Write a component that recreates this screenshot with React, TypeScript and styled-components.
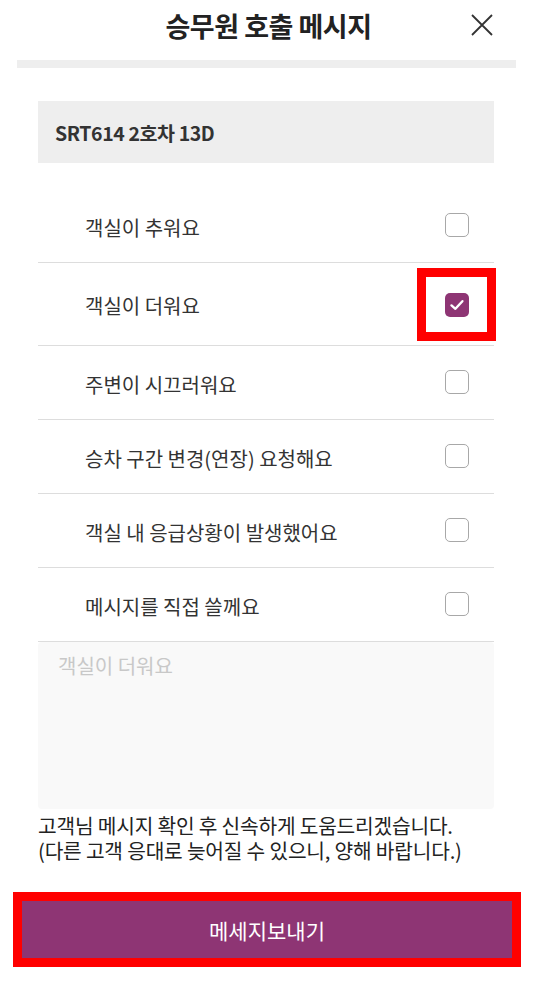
import React, { useState } from 'react'
import styled, { createGlobalStyle } from 'styled-components'

const PURPLE = '#8e3574'

const options = [
    '객실이 추워요',
    '객실이 더워요',
    '주변이 시끄러워요',
    '승차 구간 변경(연장) 요청해요',
    '객실 내 응급상황이 발생했어요',
    '메시지를 직접 쓸께요',
]

export default function App() {
    const [checked, setChecked] = useState(1)

    return (
        <>
            <GlobalStyle />
            <Page>
                <Header>
                    <span />
                    <Title>승무원 호출 메시지</Title>
                    <CloseButton aria-label='닫기'>
                        <svg width='24' height='24' viewBox='0 0 24 24'>
                            <path d='M2 2 L22 22 M22 2 L2 22' stroke='#333' strokeWidth='1.8' fill='none' />
                        </svg>
                    </CloseButton>
                </Header>
                <Divider />
                <Content>
                    <InfoBox>SRT614 2호차 13D</InfoBox>
                    <List>
                        {options.map((label, i) => {
                            const box = (
                                <CheckBox checked={checked === i}>
                                    {checked === i && (
                                        <svg width='16' height='16' viewBox='0 0 16 16'>
                                            <path d='M2.5 8.4 L6.4 11.8 L13.4 4.2' stroke='#fff' strokeWidth='2.4' fill='none' strokeLinecap='round' strokeLinejoin='round' />
                                        </svg>
                                    )}
                                </CheckBox>
                            )
                            return (
                                <Row key={i} onClick={() => setChecked(i)}>
                                    <Label>{label}</Label>
                                    {checked === i ? <Highlight>{box}</Highlight> : box}
                                </Row>
                            )
                        })}
                    </List>
                    <MessageInput placeholder='객실이 더워요' />
                    <Notice>
                        <NoticeLine>고객님 메시지 확인 후 신속하게 도움드리겠습니다.</NoticeLine>
                        <NoticeLine>(다른 고객 응대로 늦어질 수 있으니, 양해 바랍니다.)</NoticeLine>
                    </Notice>
                </Content>
                <Footer>
                    <SendFrame>
                        <SendButton>메세지보내기</SendButton>
                    </SendFrame>
                </Footer>
            </Page>
        </>
    )
}

const GlobalStyle = createGlobalStyle`
    html, body {
        margin: 0;
        padding: 0;
        background: #fff;
    }
    * {
        box-sizing: border-box;
    }
`

const Page = styled.div`
    width: 537px;
    font-family: "Noto Sans CJK KR", "Noto Sans", sans-serif;
    color: #333;
`

const Header = styled.div`
    display: grid;
    grid-template-columns: 1fr auto 1fr;
    align-items: center;
    height: 50px;
`

const Title = styled.h1`
    margin: 0;
    font-size: 27px;
    font-weight: 700;
    color: #222;
    letter-spacing: -0.5px;
`

const CloseButton = styled.button`
    justify-self: end;
    margin-right: 43px;
    padding: 0;
    border: none;
    background: none;
    display: flex;
`

const Divider = styled.div`
    height: 8px;
    margin: 10px 21px 0 17px;
    background: #eeeeee;
`

const Content = styled.div`
    padding: 33px 43px 0 38px;
`

const InfoBox = styled.div`
    display: flex;
    align-items: center;
    height: 62px;
    padding-left: 17px;
    background: #eeeeee;
    font-size: 19.5px;
    font-weight: 700;
    color: #333;
    letter-spacing: -0.4px;
`

const List = styled.div`
    margin-top: 26px;
`

const Row = styled.div`
    display: flex;
    align-items: center;
    justify-content: space-between;
    min-height: 74px;
    padding: 3px 25px 0 47px;
    border-bottom: 1px solid #dddddd;
    cursor: pointer;
`

const Label = styled.span`
    font-size: 20px;
    color: #333;
`

const CheckBox = styled.span<{ checked: boolean }>`
    display: flex;
    align-items: center;
    justify-content: center;
    flex-shrink: 0;
    width: 24px;
    height: 24px;
    margin-top: -5px;
    border-radius: 5px;
    border: ${p => (p.checked ? 'none' : '1.5px solid #a8a8a8')};
    background: ${p => (p.checked ? PURPLE : '#fff')};
`

const Highlight = styled.span`
    display: flex;
    align-items: center;
    justify-content: center;
    flex-shrink: 0;
    width: 79px;
    height: 73px;
    margin: 2px -27px 4px 0;
    border: 9px solid #ff0000;

    & > span {
        margin-top: 0;
    }
`

const MessageInput = styled.textarea`
    display: block;
    width: 100%;
    height: 167px;
    margin-top: 0;
    padding: 11px 20px;
    border: none;
    border-radius: 4px;
    background: #f9f9f9;
    resize: none;
    font-family: "Noto Sans CJK KR", "Noto Sans", sans-serif;
    font-size: 20px;
    line-height: 26px;
    color: #333;
    outline: none;
    &::placeholder {
        color: #c8c8c8;
    }
`

const Notice = styled.div`
    display: flex;
    flex-direction: column;
    margin-top: 4px;
    color: #222;
`

const NoticeLine = styled.p`
    margin: 0;
    font-size: 20.3px;
    line-height: 25px;
    height: 25px;
    overflow: visible;
    letter-spacing: -0.2px;
`

const Footer = styled.div`
    padding: 29px 16px 0 13px;
`

const SendFrame = styled.div`
    border: 9px solid #ff0000;
`

const SendButton = styled.button`
    display: block;
    width: 100%;
    height: 57px;
    border: none;
    background: ${PURPLE};
    color: #fff;
    font-family: "Noto Sans CJK KR", "Noto Sans", sans-serif;
    font-size: 21px;
`
